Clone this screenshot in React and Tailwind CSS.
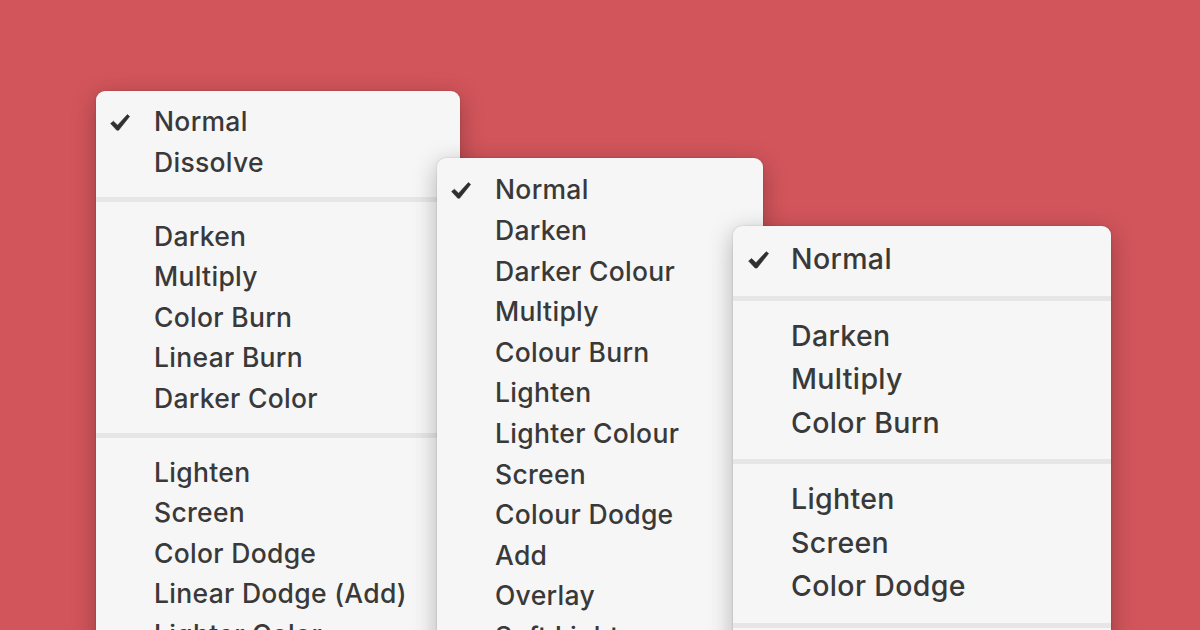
import React from "react";

function Check({ w = 20 }) {
  return (
    <svg width={w} height={w * 0.85} viewBox="0 0 20 17" className="block">
      <path d="M0.6 9.6 L3.4 7.2 L7.6 11.2 L17.4 0.6 L19.6 2.4 L8.6 16.2 L6.8 16.2 Z" fill="#303030" strokeLinejoin="round" stroke="#303030" strokeWidth="0.6" />
    </svg>
  );
}

function Menu({ className, groups, rowClass, textClass, checkW, checkPad }) {
  return (
    <div className={`absolute bg-[#f6f6f6] rounded-[9px] shadow-[0_6px_24px_rgba(0,0,0,0.28),0_0_2px_rgba(0,0,0,0.18)] ${className}`}>
      {groups.map((g, gi) => (
        <div key={gi} className="flex flex-col">
          {gi > 0 && <div className="my-[14px] h-[5px] bg-[#e6e6e6]" />}
          {g.map((item, i) => (
            <div key={i} className={`flex items-center ${rowClass}`}>
              <div className={`w-[58px] flex justify-end ${checkPad}`}>
                {item.checked && <Check w={checkW} />}
              </div>
              <span className={`text-[#393939] font-medium whitespace-nowrap ${textClass}`} style={{ fontFamily: "Inter, 'Liberation Sans', sans-serif" }}>
                {item.label}
              </span>
            </div>
          ))}
        </div>
      ))}
    </div>
  );
}

const m1 = [
  [{ label: "Normal", checked: true }, { label: "Dissolve" }],
  [{ label: "Darken" }, { label: "Multiply" }, { label: "Color Burn" }, { label: "Linear Burn" }, { label: "Darker Color" }],
  [{ label: "Lighten" }, { label: "Screen" }, { label: "Color Dodge" }, { label: "Linear Dodge (Add)" }, { label: "Lighter Color" }],
];

const m2 = [
  [
    { label: "Normal", checked: true },
    { label: "Darken" },
    { label: "Darker Colour" },
    { label: "Multiply" },
    { label: "Colour Burn" },
    { label: "Lighten" },
    { label: "Lighter Colour" },
    { label: "Screen" },
    { label: "Colour Dodge" },
    { label: "Add" },
    { label: "Overlay" },
    { label: "Soft Light" },
  ],
];

const m3 = [
  [{ label: "Normal", checked: true }],
  [{ label: "Darken" }, { label: "Multiply" }, { label: "Color Burn" }],
  [{ label: "Lighten" }, { label: "Screen" }, { label: "Color Dodge" }],
  [{ label: "Overlay" }],
];

export default function App() {
  return (
    <div className="relative w-[1200px] h-[630px] overflow-hidden bg-[#d2555b]">
      <Menu className="left-[96px] top-[91px] w-[364px] pt-[11px]" groups={m1} rowClass="h-[40.6px]" textClass="text-[26.5px] tracking-[0.3px]" checkW={20} checkPad="pr-[24px]" />
      <Menu className="left-[437px] top-[158px] w-[326px] pt-[12px]" groups={m2} rowClass="h-[40.6px]" textClass="text-[26.5px] tracking-[0.3px]" checkW={20} checkPad="pr-[24px]" />
      <Menu className="left-[733px] top-[226px] w-[378px] pt-[12px]" groups={m3} rowClass="h-[43.5px]" textClass="text-[28.5px] tracking-[0.35px]" checkW={21} checkPad="pr-[22px]" />
    </div>
  );
}
